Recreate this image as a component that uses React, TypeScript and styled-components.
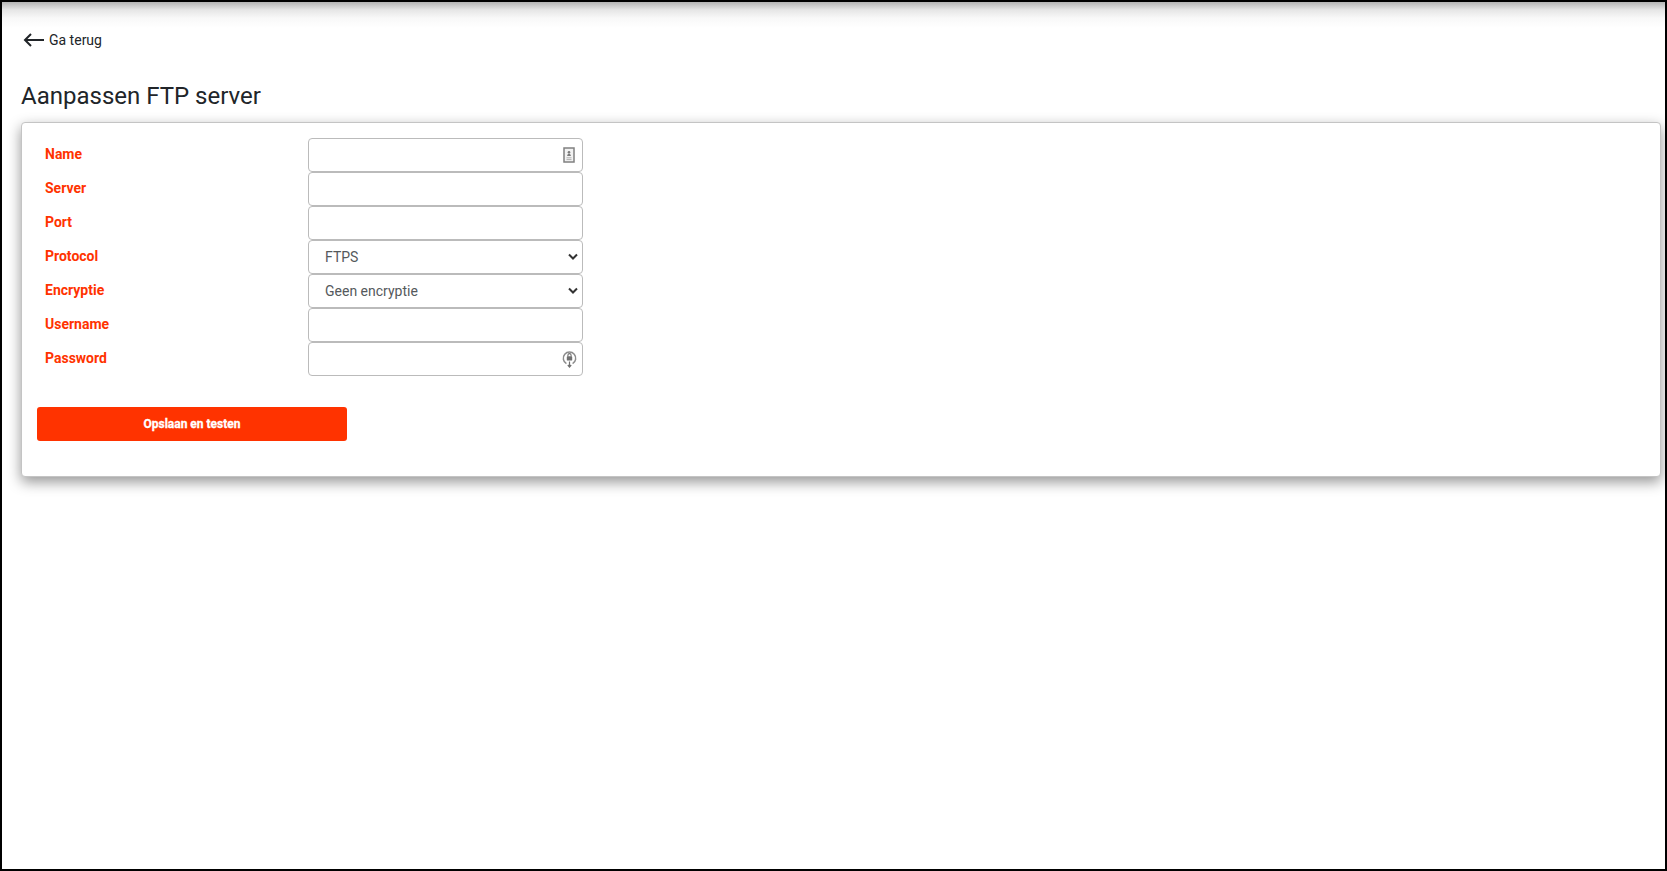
import React from "react";
import styled, { createGlobalStyle } from "styled-components";

const GlobalStyle = createGlobalStyle`
  html, body {
    margin: 0;
    padding: 0;
    background: #fff;
    font-family: Roboto, "Liberation Sans", sans-serif;
  }
`;

const Page = styled.div`
  box-sizing: border-box;
  height: 871px;
  border: 2px solid #000;
  padding: 0 4px 0 19px;
  overflow: hidden;
  background: linear-gradient(to bottom, #b4b4b4 0, #e6e6e6 8px, #f8f8f8 16px, #fff 26px);
`;

const BackLink = styled.a`
  display: flex;
  align-items: center;
  gap: 5px;
  margin: 26px 0 0 2px;
  height: 24px;
  font-size: 14px;
  color: #212529;
  text-decoration: none;
`;

const Title = styled.h1`
  margin: 28px 0 0;
  font-size: 24px;
  line-height: 32px;
  font-weight: 400;
  color: #212529;
`;

const Card = styled.form`
  box-sizing: border-box;
  height: 355px;
  margin-top: 10px;
  padding: 15px 15px 0;
  background: #fff;
  border: 1px solid #c4c4c4;
  border-radius: 4px;
  box-shadow: 0 5px 14px rgba(0, 0, 0, 0.42);
`;

const Row = styled.div`
  display: flex;
  align-items: center;
  height: 34px;
  padding-left: 8px;
`;

const Label = styled.label`
  width: 263px;
  font-size: 14px;
  font-weight: 700;
  color: #ff3300;
  margin-top: -2px;
`;

const FieldBox = styled.div`
  position: relative;
  width: 275px;
  height: 34px;
`;

const TextInput = styled.input`
  box-sizing: border-box;
  width: 100%;
  height: 100%;
  padding: 0 30px 0 16px;
  border: 1px solid #bbb;
  border-radius: 4px;
  background: #fff;
  outline: none;
  font: 14px Roboto, sans-serif;
`;

const Select = styled.select`
  box-sizing: border-box;
  width: 100%;
  height: 100%;
  padding: 0 24px 0 16px;
  border: 1px solid #bbb;
  border-radius: 4px;
  background: #fff;
  appearance: none;
  outline: none;
  font: 14px Roboto, sans-serif;
  color: #55595c;
`;

const ContactSvg = styled.svg`
  position: absolute;
  top: 9px;
  right: 8px;
  width: 12px;
  height: 16px;
  pointer-events: none;
`;

const LockSvg = styled.svg`
  position: absolute;
  top: 8px;
  right: 6px;
  width: 15px;
  height: 18px;
  pointer-events: none;
`;

const Chevron = styled.svg`
  position: absolute;
  top: 13px;
  right: 5px;
  width: 10px;
  height: 8px;
  pointer-events: none;
`;

const SaveButton = styled.button`
  display: block;
  width: 310px;
  height: 34px;
  margin: 31px 0 0;
  border: none;
  border-radius: 3px;
  background: #ff3300;
  color: #fff;
  font: 700 12px Roboto, sans-serif;
  -webkit-text-stroke: 0.3px #fff;
`;

const ContactIcon = () => (
  <ContactSvg viewBox="0 0 12 16">
    <rect x="1" y="1" width="10" height="14" fill="#f2f2f2" stroke="#808080" strokeWidth="1.5" />
    <circle cx="6" cy="5.2" r="1.3" fill="#7a7a7a" />
    <path d="M4 9l1-2.2h2L8 9z" fill="#7a7a7a" />
    <path d="M3.5 10.8h5M3.5 12.6h5" stroke="#b0b0b0" strokeWidth="1" />
  </ContactSvg>
);

const LockIcon = () => (
  <LockSvg viewBox="0 0 15 18">
    <path d="M4.4 13.6a6.2 6.2 0 1 1 6.2 0" fill="none" stroke="#8c8c8c" strokeWidth="1.5" />
    <rect x="4.8" y="6.2" width="5.4" height="4.4" rx="0.7" fill="#707070" />
    <path d="M5.9 6.4V5.2a1.6 1.6 0 0 1 3.2 0v1.2" fill="none" stroke="#707070" strokeWidth="1.1" />
    <path d="M7.5 11.5v5.5M5.8 15L7.5 17l1.7-2" fill="none" stroke="#707070" strokeWidth="1.2" />
  </LockSvg>
);

const SelectChevron = () => (
  <Chevron viewBox="0 0 10 8">
    <path d="M1 1.5l4 4 4-4" fill="none" stroke="#333" strokeWidth="2" />
  </Chevron>
);

const App = () => {
  return (
    <>
      <GlobalStyle />
      <Page>
        <BackLink href="#">
          <svg width="21" height="14" viewBox="0 0 21 14">
            <path d="M21 7H2M8 1L2 7l6 6" fill="none" stroke="#212529" strokeWidth="2" />
          </svg>
          Ga terug
        </BackLink>
        <Title>Aanpassen FTP server</Title>
        <Card>
          <Row>
            <Label>Name</Label>
            <FieldBox>
              <TextInput type="text" />
              <ContactIcon />
            </FieldBox>
          </Row>
          <Row>
            <Label>Server</Label>
            <FieldBox>
              <TextInput type="text" />
            </FieldBox>
          </Row>
          <Row>
            <Label>Port</Label>
            <FieldBox>
              <TextInput type="text" />
            </FieldBox>
          </Row>
          <Row>
            <Label>Protocol</Label>
            <FieldBox>
              <Select defaultValue="FTPS">
                <option>FTPS</option>
                <option>FTP</option>
              </Select>
              <SelectChevron />
            </FieldBox>
          </Row>
          <Row>
            <Label>Encryptie</Label>
            <FieldBox>
              <Select defaultValue="Geen encryptie">
                <option>Geen encryptie</option>
              </Select>
              <SelectChevron />
            </FieldBox>
          </Row>
          <Row>
            <Label>Username</Label>
            <FieldBox>
              <TextInput type="text" />
            </FieldBox>
          </Row>
          <Row>
            <Label>Password</Label>
            <FieldBox>
              <TextInput type="password" />
              <LockIcon />
            </FieldBox>
          </Row>
          <SaveButton type="button">Opslaan en testen</SaveButton>
        </Card>
      </Page>
    </>
  );
};

export default App;
